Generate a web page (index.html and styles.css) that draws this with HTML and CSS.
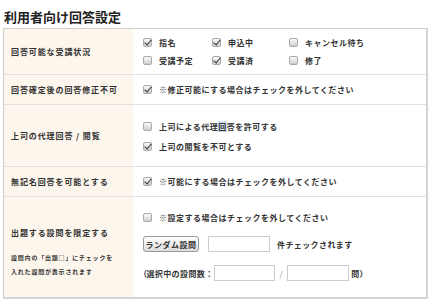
FILE: index.html
```html
<!DOCTYPE html>
<html lang="ja">
<head>
<meta charset="utf-8">
<link rel="stylesheet" href="styles.css">
</head>
<body>
<h1 class="title">利用者向け回答設定</h1>
<div class="table">
  <div class="row row1">
    <div class="label">回答可能な受講状況</div>
    <div class="content">
      <div class="opts">
        <label class="opt"><span class="cb on"></span>指名</label>
        <label class="opt"><span class="cb on"></span>申込中</label>
        <label class="opt"><span class="cb"></span>キャンセル待ち</label>
        <label class="opt"><span class="cb"></span>受講予定</label>
        <label class="opt"><span class="cb on"></span>受講済</label>
        <label class="opt"><span class="cb"></span>修了</label>
      </div>
    </div>
  </div>
  <div class="row row2">
    <div class="label">回答確定後の回答修正不可</div>
    <div class="content">
      <label class="opt"><span class="cb on"></span>※修正可能にする場合はチェックを外してください</label>
    </div>
  </div>
  <div class="row row3">
    <div class="label">上司の代理回答 / 閲覧</div>
    <div class="content stack">
      <label class="opt"><span class="cb"></span>上司による代理<span class="hl">回</span>答を許可する</label>
      <label class="opt"><span class="cb on"></span>上司の閲覧を不可とする</label>
    </div>
  </div>
  <div class="row row4">
    <div class="label">無記名回答を可能とする</div>
    <div class="content">
      <label class="opt"><span class="cb on"></span>※可能にする場合はチェックを外してください</label>
    </div>
  </div>
  <div class="row row5">
    <div class="label label-col">
      <div>出題する設問を限定する</div>
      <div class="note">設問内の「出題□」にチェックを<br>入れた設問が表示されます</div>
    </div>
    <div class="content stack5">
      <label class="opt"><span class="cb"></span>※設定する場合はチェックを外してください</label>
      <div class="line">
        <button class="btn" type="button">ランダム設問</button>
        <span class="inp w62"></span>
        <span class="txt after">件チェックされます</span>
      </div>
      <div class="line">
        <span class="txt"><span class="paren">（</span>選択中の設問数：</span>
        <span class="inp w61"></span>
        <span class="txt slash">/</span>
        <span class="inp w62"></span>
        <span class="txt end">問）</span>
      </div>
    </div>
  </div>
</div>
</body>
</html>
```

FILE: styles.css
```css
html, body {
  margin: 0;
  padding: 0;
  background: #ffffff;
}
body {
  padding: 0 3px;
  font-family: "Noto Sans CJK JP", "Noto Sans", sans-serif;
  color: #333333;
}
.title {
  margin: 0;
  padding: 9px 0 0 1px;
  height: 19px;
  font-size: 13px;
  line-height: 16px;
  font-weight: bold;
  color: #222222;
  letter-spacing: 0;
}
.table {
  width: 422px;
  border: 1px solid #cfcfcf;
  border-right: 2px solid #d4d4d4;
  border-bottom: 2px solid #d4d4d4;
}
.row {
  display: grid;
  grid-template-columns: 129px 1fr;
  border-bottom: 1px solid #e2e2e2;
}
.row:last-child {
  border-bottom: none;
}
.row1 { height: 45px; }
.row2 { height: 29px; }
.row3 { height: 61px; }
.row4 { height: 29px; }
.row5 { height: 100px; }
.label {
  background: #fdf6ec;
  display: flex;
  align-items: center;
  padding-left: 7px;
  font-size: 8px;
  letter-spacing: 0.9px;
  color: #333333;
  font-weight: bold;
}
.label-col {
  flex-direction: column;
  align-items: flex-start;
  justify-content: center;
  padding-top: 12px;
}
.note {
  margin-top: 13px;
  font-size: 6px;
  line-height: 14px;
  letter-spacing: 0.8px;
}
.content {
  padding-left: 10px;
  display: flex;
  align-items: center;
  font-size: 8px;
  letter-spacing: 0.5px;
  font-weight: bold;
  color: #333333;
}
.opts {
  display: grid;
  grid-template-columns: 69px 77px 1fr;
  row-gap: 6px;
}
.opt {
  display: flex;
  align-items: center;
  height: 12px;
  white-space: nowrap;
}
.stack {
  flex-direction: column;
  align-items: flex-start;
  justify-content: center;
  gap: 8px;
  padding-top: 2px;
}
.stack5 {
  flex-direction: column;
  align-items: flex-start;
  justify-content: flex-start;
  padding-top: 14px;
  gap: 13px;
}
.cb {
  width: 9px;
  height: 9px;
  box-sizing: border-box;
  border: 1px solid #a9a9a9;
  border-radius: 2px;
  background: linear-gradient(#fafafa, #cfcfcf);
  margin-right: 7px;
  flex: none;
  position: relative;
}
.cb.on::after {
  content: "";
  position: absolute;
  left: 2px;
  top: -1px;
  width: 3px;
  height: 6px;
  border-right: 1.5px solid #333;
  border-bottom: 1.5px solid #333;
  transform: rotate(40deg);
}
.hl {
  background: #cfe3f7;
}
.line {
  display: flex;
  align-items: center;
  height: 16px;
  white-space: nowrap;
}
.btn {
  height: 16px;
  width: 56px;
  padding: 0;
  margin: 0 9px 0 0;
  border: 1px solid #9a9a9a;
  border-radius: 3px;
  background: linear-gradient(#ffffff, #dcdcdc);
  font-family: inherit;
  font-size: 8px;
  font-weight: bold;
  letter-spacing: 0.5px;
  color: #333333;
}
.inp {
  display: inline-block;
  height: 16px;
  box-sizing: border-box;
  border: 1px solid #cccccc;
  background: #ffffff;
}
.w62 { width: 62px; }
.w61 { width: 61px; }
.after { margin-left: 7px; }
.paren {
  margin-left: -4px;
  margin-right: -1px;
}
.txt {
  letter-spacing: 0.4px;
}
.slash {
  margin: 0 4px 0 5px;
  color: #888888;
  font-weight: normal;
}
.end { margin-left: 2px; }
```
